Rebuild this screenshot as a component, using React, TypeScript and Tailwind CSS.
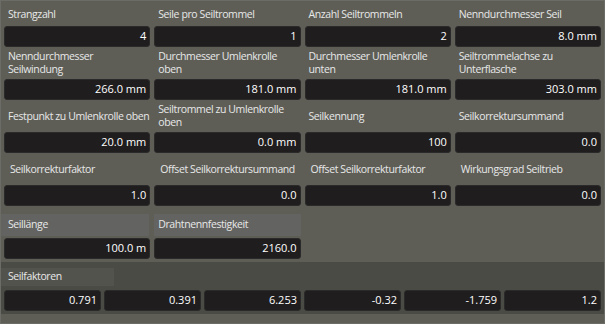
import React from "react";

type Field = { label: string; value: string };

const rows: Field[][] = [
  [
    { label: "Strangzahl", value: "4" },
    { label: "Seile pro Seiltrommel", value: "1" },
    { label: "Anzahl Seiltrommeln", value: "2" },
    { label: "Nenndurchmesser Seil", value: "8.0 mm" },
  ],
  [
    { label: "Nenndurchmesser Seilwindung", value: "266.0 mm" },
    { label: "Durchmesser Umlenkrolle oben", value: "181.0 mm" },
    { label: "Durchmesser Umlenkrolle unten", value: "181.0 mm" },
    { label: "Seiltrommelachse zu Unterflasche", value: "303.0 mm" },
  ],
  [
    { label: "Festpunkt zu Umlenkrolle oben", value: "20.0 mm" },
    { label: "Seiltrommel zu Umlenkrolle oben", value: "0.0 mm" },
    { label: "Seilkennung", value: "100" },
    { label: "Seilkorrektursummand", value: "0.0" },
  ],
  [
    { label: "Seilkorrekturfaktor", value: "1.0" },
    { label: "Offset Seilkorrektursummand", value: "0.0" },
    { label: "Offset Seilkorrekturfaktor", value: "1.0" },
    { label: "Wirkungsgrad Seiltrieb", value: "0.0" },
  ],
];

const faktoren = ["0.791", "0.391", "6.253", "-0.32", "-1.759", "1.2"];

// fixed line breaks like the original form
const wraps: Record<string, [string, string]> = {
  "Nenndurchmesser Seilwindung": ["Nenndurchmesser", "Seilwindung"],
  "Durchmesser Umlenkrolle oben": ["Durchmesser Umlenkrolle", "oben"],
  "Durchmesser Umlenkrolle unten": ["Durchmesser Umlenkrolle", "unten"],
  "Seiltrommelachse zu Unterflasche": ["Seiltrommelachse zu", "Unterflasche"],
  "Seiltrommel zu Umlenkrolle oben": ["Seiltrommel zu Umlenkrolle", "oben"],
};

function ValueBox({ value }: { value: string }) {
  return (
    <div className="h-[21px] rounded-[3px] bg-[#1f1d1e] border border-[#2b2a2a] flex items-center justify-end pr-[3px] text-[11px] text-white">
      {value}
    </div>
  );
}

export default function App() {
  return (
    <div
      className="w-[605px] h-[324px] bg-[#5e5e57] border border-[#6c6c66] overflow-hidden text-[#e8e8e8]"
      style={{ fontFamily: '"Open Sans", "Liberation Sans", sans-serif' }}
    >
      <div className="px-[3px]">
        {rows.map((row, i) => (
          <div key={i} className="grid grid-cols-4 gap-x-[4px]">
            {row.map((f) => (
              <div key={f.label} className="flex flex-col">
                <div
                  className={`flex flex-col justify-center whitespace-nowrap text-[10.5px] leading-[13px] tracking-[-0.4px] ${
                    i === 0 ? "h-[25px] pt-[1px]" : "h-[32px]"
                  } ${i === 3 ? "pl-[6px]" : "pl-[4px]"}`}
                >
                  {wraps[f.label] ? (
                    <>
                      <span>{wraps[f.label][0]}</span>
                      <span>{wraps[f.label][1]}</span>
                    </>
                  ) : (
                    <span>{f.label}</span>
                  )}
                </div>
                <ValueBox value={f.value} />
              </div>
            ))}
          </div>
        ))}

        <div className="grid grid-cols-4 gap-x-[4px]">
          <div className="flex flex-col">
            <div className="h-[32px] flex items-end pb-[2px] -ml-[4px]">
              <div className="h-[22px] w-[149px] bg-[#636361] flex items-center pl-[8px] text-[10.5px] tracking-[-0.4px]">
                Seillänge
              </div>
            </div>
            <ValueBox value="100.0 m" />
          </div>
          <div className="flex flex-col">
            <div className="h-[32px] flex items-end pb-[2px]">
              <div className="h-[22px] w-[162px] bg-[#636361] flex items-center pl-[4px] text-[10.5px] tracking-[-0.4px] relative z-10">
                Drahtnennfestigkeit
              </div>
            </div>
            <ValueBox value="2160.0" />
          </div>
        </div>
      </div>

      <div className="mt-[3px] bg-[#4b4b45] h-[52px] flex flex-col">
        <div className="mt-[6px] h-[18px] w-[113px] bg-[#53534e] flex items-center pl-[7px] text-[10.5px] tracking-[-0.4px]">
          Seilfaktoren
        </div>
        <div className="mt-[4px] px-[3px] grid grid-cols-6 gap-x-[3px]">
          {faktoren.map((v, i) => (
            <ValueBox key={i} value={v} />
          ))}
        </div>
      </div>
    </div>
  );
}
